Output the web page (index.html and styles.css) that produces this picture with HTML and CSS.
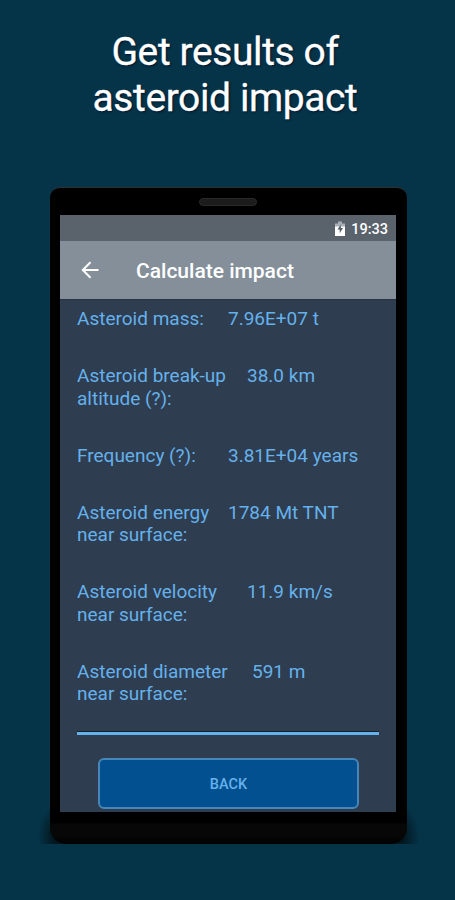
FILE: index.html
```html
<!DOCTYPE html>
<html lang="en">

<head>
    <meta charset="UTF-8">
    <meta name="viewport" content="width=device-width, initial-scale=1.0">
    <title>Calculate impact</title>
    <link rel="stylesheet" href="styles.css">
</head>

<body>
    <h1>Get results of<br>asteroid impact</h1>

    <div class="phone">
        <div class="speaker"></div>
        <div class="screen">
            <div class="status-bar">
                <svg class="battery" width="12" height="16" viewBox="0 0 12 16">
                    <path d="M4 0.5h4v2h3v4H1v-4h3z" fill="#a9afb6" />
                    <path d="M1 5.500h10v9.500H1z" fill="#fff" />
                    <path d="M6.800 3.500L3.500 8.500h2.200v3.700L9 7H6.800z" fill="#535b65" />
                </svg>
                <span>19:33</span>
            </div>
            <header class="app-bar">
                <svg class="arrow" width="20" height="20" viewBox="0 0 20 20" fill="none" stroke="#fff" stroke-width="2">
                    <path d="M18.500 10H3M10.500 2.300L2.800 10l7.700 7.700" />
                </svg>
                <h2>Calculate impact</h2>
            </header>
            <main class="content">
                <dl class="results">
                    <div class="row">
                        <dt>Asteroid mass:</dt>
                        <dd>7.96E+07 t</dd>
                    </div>
                    <div class="row wide">
                        <dt>Asteroid break-up<br>altitude (?):</dt>
                        <dd>38.0 km</dd>
                    </div>
                    <div class="row">
                        <dt>Frequency (?):</dt>
                        <dd>3.81E+04 years</dd>
                    </div>
                    <div class="row">
                        <dt>Asteroid energy<br>near surface:</dt>
                        <dd>1784 Mt TNT</dd>
                    </div>
                    <div class="row wide">
                        <dt>Asteroid velocity<br>near surface:</dt>
                        <dd>11.9 km/s</dd>
                    </div>
                    <div class="row wider">
                        <dt>Asteroid diameter<br>near surface:</dt>
                        <dd>591 m</dd>
                    </div>
                </dl>
                <hr class="divider">
                <button type="button" class="back">BACK</button>
            </main>
        </div>
    </div>
</body>

</html>
```
FILE: styles.css
```css
* {
    box-sizing: border-box;
}

body {
    font-family: Roboto, sans-serif;
    margin: 0;
    height: 900px;
    overflow: hidden;
    background-color: #053347;
}

h1 {
    margin: 0;
    padding: 29px 5px 0 0;
    height: 187px;
    text-align: center;
    color: #fff;
    font-size: 39px;
    font-weight: 400;
    line-height: 46px;
    letter-spacing: -0.4px;
    -webkit-text-stroke: 0.3px #fff;
    text-shadow: 1px 1px 2px #02102a;
}

.phone {
    position: relative;
    width: 357px;
    height: 657px;
    margin-left: 50px;
    padding: 10px 11px 0 10px;
    border-top: 1px solid #303030;
    border-radius: 10px 10px 16px 16px;
    background: linear-gradient(#000 0, #000 635px, #070707 636px, #070707 648px, #000 656px);
}

/* ground shadow at the lower corners */
.phone::after {
    content: "";
    position: absolute;
    z-index: -1;
    left: -14px;
    right: -14px;
    bottom: 0;
    height: 36px;
    background: radial-gradient(20px 32px at 22px 80%, #000b, transparent), radial-gradient(20px 32px at calc(100% - 22px) 80%, #000b, transparent);
}

.speaker {
    width: 58px;
    height: 8px;
    margin: 0 0 9px 139px;
    border: 1px solid #292929;
    border-radius: 4px;
    background-color: #1c1c1c;
}

.screen {
    height: 597px;
    overflow: hidden;
    background-color: #2e3d4f;
}

.status-bar {
    display: flex;
    align-items: center;
    justify-content: flex-end;
    height: 26px;
    padding: 2px 8px 0 0;
    background-color: #5a626c;
    color: #fff;
    font-size: 14.5px;
    font-weight: 500;
}

.battery {
    margin-right: 5px;
}

.app-bar {
    display: flex;
    align-items: center;
    height: 58px;
    padding-left: 20px;
    background-color: #848f9a;
    color: #fff;
}

.app-bar h2 {
    margin: 2px 0 0 36px;
    font-size: 21px;
    font-weight: 500;
}

.content {
    padding: 8px 17px 0;
    border-top: 1px solid #263443;
}

.results {
    display: flex;
    flex-direction: column;
    gap: 34.6px;
    margin: 0;
    padding-top: 0.4px;
    color: #65b1ec;
    font-size: 19px;
    line-height: 22.4px;
}

.row {
    display: grid;
    grid-template-columns: 151px 1fr;
    white-space: nowrap;
}

.wide {
    grid-template-columns: 170px 1fr;
}

.wider {
    grid-template-columns: 175px 1fr;
}

.row dd {
    margin: 0;
}

.divider {
    height: 4px;
    margin: 25.6px 0 23px;
    border: 0;
    border-top: 1px solid #15202c;
    background-color: #65b1ec;
}

.back {
    display: block;
    width: 261px;
    height: 51px;
    margin-left: 21px;
    padding-top: 3px;
    border: 2px solid #4686b8;
    border-radius: 6px;
    background-color: #02508f;
    color: #65b1ec;
    font-family: Roboto, sans-serif;
    font-size: 14.5px;
    font-weight: 500;
}
```
